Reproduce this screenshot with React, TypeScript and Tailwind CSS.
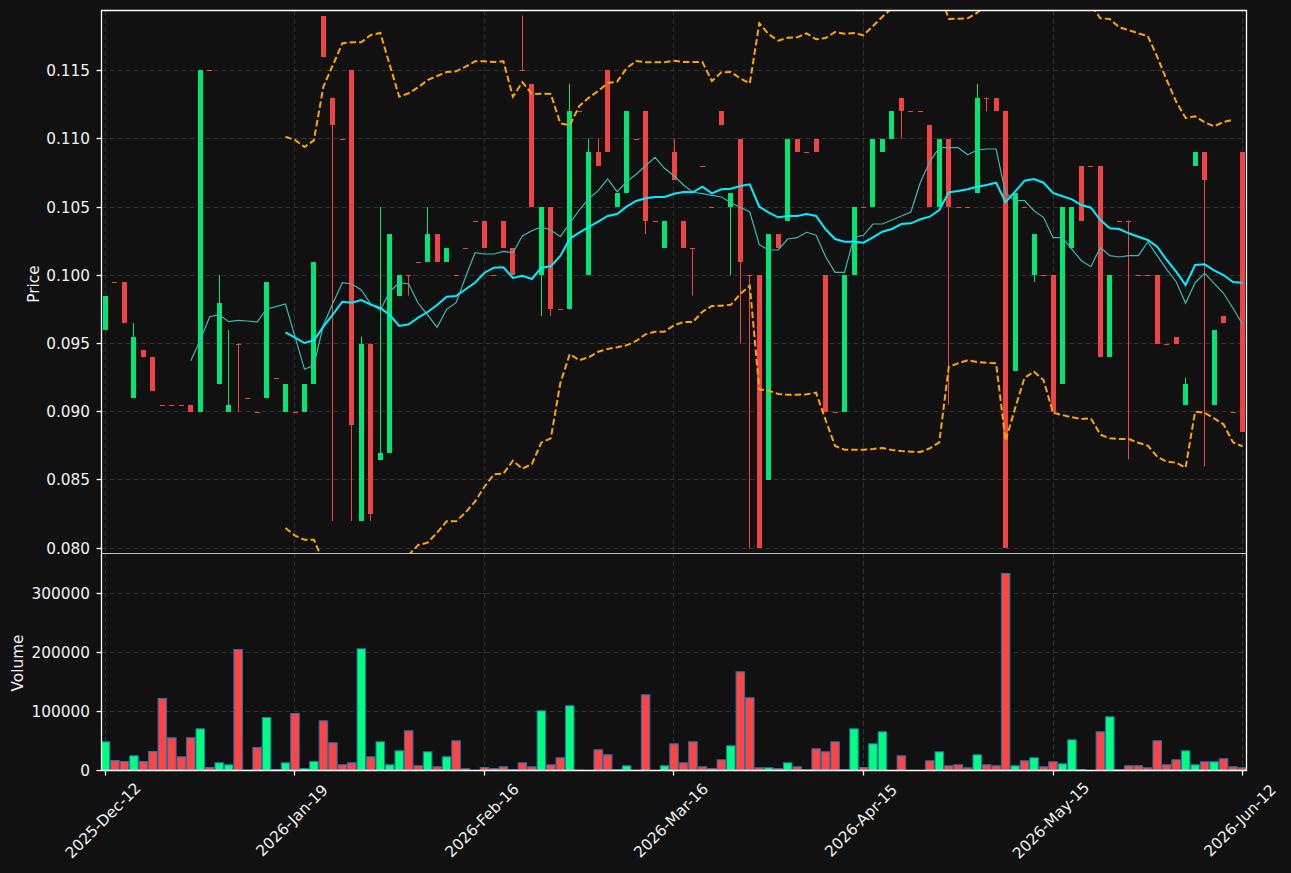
const STEP = 9.475;
const X0 = 105.5;
const LEFT = 101.5;
const RIGHT = 1246.5;
const TOP = 10.5;
const SPLIT = 553;
const BASE = 770.5;

const xAt = (i: number) => X0 + STEP * i;
const priceY = (p: number) => 70.3 + ((1150 - p) / 50) * 68.3;

// dir, body top, body bottom, high, low (price in 1e-4 units)
type Candle = [0 | 1, number, number, number?, number?];

const CANDLES: Candle[] = [
  [1, 985, 960], [0, 995, 995], [0, 995, 965], [1, 955, 910, 965], [0, 945, 940], [0, 940, 915],
  [0, 905, 905], [0, 905, 905], [0, 905, 905], [0, 905, 900], [1, 1150, 900], [0, 1150, 1150],
  [1, 980, 920, 1000], [1, 905, 900, 960], [0, 950, 950, 950, 900], [0, 910, 910], [0, 900, 900],
  [1, 995, 910], [0, 925, 925], [1, 920, 900], [0, 900, 900], [1, 920, 900], [1, 1010, 920],
  [0, 1190, 1160], [0, 1130, 1110, 1130, 820], [0, 1100, 1100], [0, 1150, 890, 1150, 820],
  [1, 950, 820, 955], [0, 950, 825, 950, 820], [1, 870, 865, 1050], [1, 1030, 870], [1, 1000, 985],
  [0, 1000, 1000, 1000, 985], [0, 1010, 1010], [1, 1030, 1010, 1050], [0, 1030, 1010], [1, 1020, 1010],
  [0, 1000, 1000], [0, 1020, 1020], [0, 1040, 1040], [0, 1040, 1020], [0, 1000, 1000], [0, 1040, 1020],
  [0, 1020, 1000], [0, 1150, 1150, 1190], [0, 1140, 1050], [1, 1050, 1000, 1050, 970],
  [0, 1050, 975, 1050, 970], [0, 975, 975], [1, 1120, 975, 1140], [0, 1120, 1120], [1, 1090, 1000, 1100],
  [0, 1090, 1080, 1100], [0, 1150, 1090], [1, 1060, 1050], [1, 1120, 1060], [0, 1100, 1100],
  [0, 1120, 1040, 1120, 1030], [0, 1040, 1040], [1, 1040, 1020], [0, 1090, 1070, 1100], [0, 1040, 1020],
  [0, 1020, 1020, 1020, 985], [0, 1080, 1080], [0, 1050, 1050], [0, 1120, 1110], [1, 1060, 1050, 1060, 1000],
  [0, 1100, 1010, 1100, 950], [0, 1000, 1000, 1000, 800], [0, 1000, 800], [1, 1030, 850], [0, 1030, 1020],
  [1, 1100, 1040], [0, 1100, 1090], [0, 1090, 1090], [0, 1100, 1090], [0, 1000, 900], [0, 900, 900],
  [1, 1000, 900], [1, 1050, 1000], [0, 1050, 1050], [1, 1100, 1050], [1, 1100, 1090], [1, 1120, 1100],
  [0, 1130, 1120, 1130, 1100], [0, 1120, 1120], [0, 1120, 1120], [0, 1110, 1050], [1, 1100, 1050],
  [0, 1100, 1050, 1100, 905], [0, 1050, 1050], [0, 1050, 1050], [1, 1130, 1060, 1140],
  [0, 1130, 1130, 1130, 1120], [0, 1130, 1120], [0, 1120, 800], [1, 1060, 930], [0, 1050, 1050],
  [1, 1030, 1000, 1030, 995], [0, 1000, 1000], [0, 1000, 900], [1, 1050, 920], [1, 1050, 1020],
  [0, 1080, 1040], [0, 1080, 1080], [0, 1080, 940], [1, 1000, 940], [0, 1040, 1040],
  [0, 1040, 1040, 1040, 865], [0, 1000, 1000], [0, 1000, 1000], [0, 1000, 950], [0, 950, 950],
  [0, 955, 950], [1, 920, 905, 925], [1, 1090, 1080], [0, 1090, 1070, 1090, 860], [1, 960, 905],
  [0, 970, 965], [0, 900, 900], [0, 1090, 885],
];

// bar heights, px above the zero line
const VOLUME = [
  28.7, 10, 9, 14.7, 9, 19, 72, 32.7, 13.7, 32.7, 41.7, 3, 7.7, 5.7, 121, 0.3, 23, 53, 1, 7.7, 57, 2, 9, 49.7,
  27.7, 5.7, 7.7, 121.7, 13.7, 28.7, 5.7, 19.7, 39.7, 4.7, 18.7, 3.7, 13.7, 29.7, 1.7, 0, 3, 2, 3.7, 1, 7.7, 3.7,
  59.7, 5.7, 12.7, 64.7, 0.3, 0, 20.7, 15.7, 1, 4.7, 0, 75.7, 0, 4.7, 26.7, 7.7, 28.7, 3.7, 2, 10.7, 24.7, 98.7,
  72.7, 2.7, 2.7, 2, 7.7, 3.7, 1, 21.7, 18.7, 28.7, 1, 41.7, 3, 26.7, 38.7, 0, 14.7, 0, 0, 9.7, 18.7, 4.7, 5.7,
  2.7, 15.7, 5.7, 4.7, 197, 4.7, 9.7, 12.7, 3.7, 8.7, 6.7, 30.7, 1, 0, 38.7, 53.7, 1, 4.7, 4.7, 2.7, 29.7, 5.7,
  10.7, 19.7, 5.7, 8.7, 8.7, 11.7, 3.7, 2.7,
];

// starts at candle 9
const THIN = [
  360.7, 340, 316.7, 314.7, 321.7, 320.3, 321, 322, 309, 306.7, 304, 336.7, 369.3, 365.3, 325, 303.3, 282.7, 284,
  290, 304, 310, 291.7, 282.7, 284, 303.3, 315, 327.3, 309.3, 302.7, 277, 252.7, 254, 254, 251.3, 252.7, 236,
  230.7, 227, 230, 236.7, 223.3, 210, 198.7, 190.7, 179, 191.7, 181.7, 174.3, 165.7, 157.3, 168.3, 175.7, 185,
  192.3, 193.7, 195.3, 197, 202.7, 207.3, 212, 244.7, 250, 250, 239, 237.7, 232.3, 235.3, 256.7, 272.3, 272.3,
  237.3, 235.3, 224, 224, 220, 216, 212, 182.3, 161.7, 147.7, 147.7, 147.7, 154.7, 150, 149, 149, 193.3, 200.7,
  200.7, 210.7, 217.3, 237.7, 237.7, 249.3, 260.7, 266.7, 247.3, 255.7, 257, 255.7, 255.7, 242, 255.7, 269.3,
  281.7, 303.3, 282.7, 273.3, 283.3, 293.3, 308.3, 324,
];

// starts at candle 19, as are the two bands
const MID = [
  332.3, 337.7, 343, 340.3, 326.7, 314.3, 301.7, 302.7, 300, 304.7, 308, 315, 326, 324.3, 317.7, 312, 305, 296.7,
  296, 289.3, 282.7, 272.7, 267.7, 267.3, 278, 275.7, 279, 267.7, 266.3, 256, 238.7, 232.7, 227, 221.7, 216, 214,
  206.7, 201, 198.3, 197, 197, 193.7, 192, 192.3, 186.7, 193.3, 189.3, 188.7, 186, 184.3, 206.7, 212.7, 217.3,
  216, 216, 214, 216, 229.3, 239, 241.7, 241.7, 242.7, 237.3, 231.7, 229, 224, 223.3, 219.3, 216.7, 210, 192.3,
  191, 189.3, 186.7, 185, 182.7, 202, 191.7, 180.7, 179, 182.7, 193, 196.3, 199.3, 205, 207.7, 220, 228.3, 229,
  233.3, 236.7, 240, 246.7, 260, 271.7, 285, 265, 264.3, 270.3, 275, 282, 282.7,
];

const UPPER = [
  136.7, 140, 147, 140.3, 86.7, 65, 43.3, 42.3, 42.3, 35, 33, 65, 96.7, 93.3, 87.3, 80, 76, 72, 71.3, 66.7, 61.3,
  61.3, 62, 61.3, 96.7, 82.3, 94, 93.7, 94, 123.3, 125.3, 106, 97.7, 91, 83, 81.7, 68.3, 61, 62.3, 62.3, 62.3,
  60.7, 62, 62, 62, 81, 72.3, 72, 78.3, 83.3, 23.3, 34.3, 40.7, 37.7, 37.3, 33.3, 39.3, 38, 32, 33.7, 33, 35.3,
  26, 16.7, 8.3, 3, 1, -3, -6, -8, 19, 18.7, 18.3, 12.7, 5, 1, -2, -4, -4, -4, -4, -4, -4, -2, 0, 5, 18.3, 19,
  27.3, 30, 33.3, 36, 56.7, 80, 101.7, 118, 116.3, 122.3, 126.3, 122, 119.7,
];

const LOWER = [
  528, 535.7, 539.7, 539.7, 562, 570, 570, 570, 570, 570, 570, 570, 570, 555, 545, 542.7, 532.7, 521.3, 521.3,
  512.3, 501.7, 486.7, 474.3, 473.7, 460.7, 468.7, 464, 442.7, 438.3, 383.3, 354, 360.3, 357.3, 351.7, 349, 347.3,
  345.3, 341, 334.3, 331.7, 331.7, 325.3, 322, 322, 311.7, 306, 305.7, 304.7, 294, 285.7, 389.3, 390.7, 394, 394.7,
  394.7, 394.3, 392.7, 420, 446, 449.7, 449.7, 449.7, 449, 448, 450, 451, 451.7, 452, 448.3, 442.3, 366.7, 363.3,
  360.3, 362, 362.7, 363.3, 440.7, 408.3, 377.7, 371.7, 380, 412.7, 415, 417.3, 419, 418.3, 434.7, 438.3, 439, 439,
  442.7, 445.7, 456.7, 461.7, 462.7, 467.7, 411.7, 412.7, 418.3, 424.3, 442.3, 446.3,
];

const PRICE_TICKS = [
  { label: '0.115', y: 70.5 },
  { label: '0.110', y: 138.5 },
  { label: '0.105', y: 207.5 },
  { label: '0.100', y: 275.5 },
  { label: '0.095', y: 343.5 },
  { label: '0.090', y: 411.5 },
  { label: '0.085', y: 479.5 },
  { label: '0.080', y: 548.5 },
];

const VOLUME_TICKS = [
  { label: '300000', y: 593.5 },
  { label: '200000', y: 652.5 },
  { label: '100000', y: 711.5 },
  { label: '0', y: 770.5 },
];

const DATE_TICKS = [
  { label: '2025-Dec-12', x: 105.5 },
  { label: '2026-Jan-19', x: 294.5 },
  { label: '2026-Feb-16', x: 484.5 },
  { label: '2026-Mar-16', x: 673.5 },
  { label: '2026-Apr-15', x: 863.5 },
  { label: '2026-May-15', x: 1053.5 },
  { label: '2026-Jun-12', x: 1242.5 },
];

const path = (start: number, ys: number[]) =>
  ys.map((y, i) => `${i === 0 ? 'M' : 'L'}${xAt(start + i).toFixed(1)} ${y}`).join(' ');

const VerticalGrid = ({ y1, y2 }: { y1: number; y2: number }) => (
  <>
    {DATE_TICKS.map((t) => (
      <line key={t.label} x1={t.x} x2={t.x} y1={y1} y2={y2} strokeDasharray="5 3" className="stroke-[#333333]" />
    ))}
  </>
);

const HorizontalTicks = ({ ticks }: { ticks: { label: string; y: number }[] }) => (
  <>
    {ticks.map((t) => (
      <g key={t.label}>
        <line x1={LEFT} x2={RIGHT} y1={t.y} y2={t.y} strokeDasharray="5 3" className="stroke-[#333333]" />
        <line x1={96.5} x2={LEFT} y1={t.y} y2={t.y} strokeWidth={1.3} className="stroke-white" />
        <text x={90} y={t.y + 5.5} textAnchor="end" className="fill-[#f2f2f2] text-[15.3px]">
          {t.label}
        </text>
      </g>
    ))}
  </>
);

const PricePanel = () => (
  <svg viewBox="0 0 1291 553" className="block h-[553px] w-[1291px] overflow-visible font-['DejaVu_Sans']">
    <defs>
      <clipPath id="price-clip">
        <rect x={LEFT} y={TOP} width={RIGHT - LEFT} height={SPLIT - TOP} />
      </clipPath>
    </defs>
    <VerticalGrid y1={TOP} y2={SPLIT} />
    <HorizontalTicks ticks={PRICE_TICKS} />
    <g clipPath="url(#price-clip)">
      {CANDLES.map(([dir, top, bottom, high, low], i) => {
        const x = Math.round(xAt(i) - 0.5);
        const yTop = Math.round(priceY(top));
        const height = Math.max(Math.round(priceY(bottom)) - yTop, 1);
        const wick = high !== undefined || low !== undefined;
        return (
          <g key={i} className={dir ? 'fill-[#00e676] stroke-[#00e676]' : 'fill-[#ef4444] stroke-[#ef4444]'}>
            {wick && (
              <line x1={x + 0.5} x2={x + 0.5} y1={priceY(high ?? top)} y2={priceY(low ?? bottom)} strokeWidth={1} />
            )}
            <rect x={x - 2} y={yTop} width={5} height={height} stroke="none" />
          </g>
        );
      })}
      <path d={path(9, THIN)} fill="none" strokeWidth={1.2} className="stroke-[#3cb8b0]" />
      <path d={path(19, MID)} fill="none" strokeWidth={2} className="stroke-[#00f0ff]" />
      <path d={path(19, UPPER)} fill="none" strokeWidth={2} strokeDasharray="6.5 3" className="stroke-[#ffa500]" />
      <path d={path(19, LOWER)} fill="none" strokeWidth={2} strokeDasharray="6.5 3" className="stroke-[#ffa500]" />
    </g>
    <path
      d={`M${LEFT} ${SPLIT} V${TOP} H${RIGHT} V${SPLIT}`}
      fill="none"
      strokeWidth={1.3}
      className="stroke-white"
    />
    <text transform="translate(38.5 284) rotate(-90)" textAnchor="middle" className="fill-[#f2f2f2] text-[15.3px]">
      Price
    </text>
  </svg>
);

const VolumePanel = () => (
  <svg viewBox="0 553 1291 320" className="block h-[320px] w-[1291px] font-['DejaVu_Sans']">
    <defs>
      <clipPath id="volume-clip">
        <rect x={LEFT} y={SPLIT} width={RIGHT - LEFT} height={BASE - SPLIT} />
      </clipPath>
    </defs>
    <VerticalGrid y1={SPLIT} y2={BASE} />
    <HorizontalTicks ticks={VOLUME_TICKS} />
    <g clipPath="url(#volume-clip)">
      {VOLUME.map((h, i) => (
        <rect
          key={i}
          x={xAt(i) - 4.25}
          y={BASE - h}
          width={8.5}
          height={h}
          strokeWidth={1}
          className={
            CANDLES[i][0] ? 'fill-[#00ff7f] stroke-[#1f77b4]' : 'fill-[#ff4444] stroke-[#1f77b4]'
          }
        />
      ))}
    </g>
    <path
      d={`M${LEFT} ${SPLIT} V${BASE} H${RIGHT} V${SPLIT} M${LEFT} ${SPLIT} H${RIGHT}`}
      fill="none"
      strokeWidth={1.3}
      className="stroke-white"
    />
    {DATE_TICKS.map((t) => (
      <g key={t.label}>
        <line x1={t.x} x2={t.x} y1={BASE} y2={BASE + 5} strokeWidth={1.3} className="stroke-white" />
        <text
          transform={`translate(${t.x - 2} 821) rotate(-45)`}
          textAnchor="middle"
          dominantBaseline="middle"
          className="fill-[#f2f2f2] text-[15.3px]"
        >
          {t.label}
        </text>
      </g>
    ))}
    <text transform="translate(22.5 663) rotate(-90)" textAnchor="middle" className="fill-[#f2f2f2] text-[15.3px]">
      Volume
    </text>
  </svg>
);

export default function App() {
  return (
    <div className="flex h-[873px] w-[1291px] flex-col overflow-hidden bg-[#111111]">
      <PricePanel />
      <VolumePanel />
    </div>
  );
}
